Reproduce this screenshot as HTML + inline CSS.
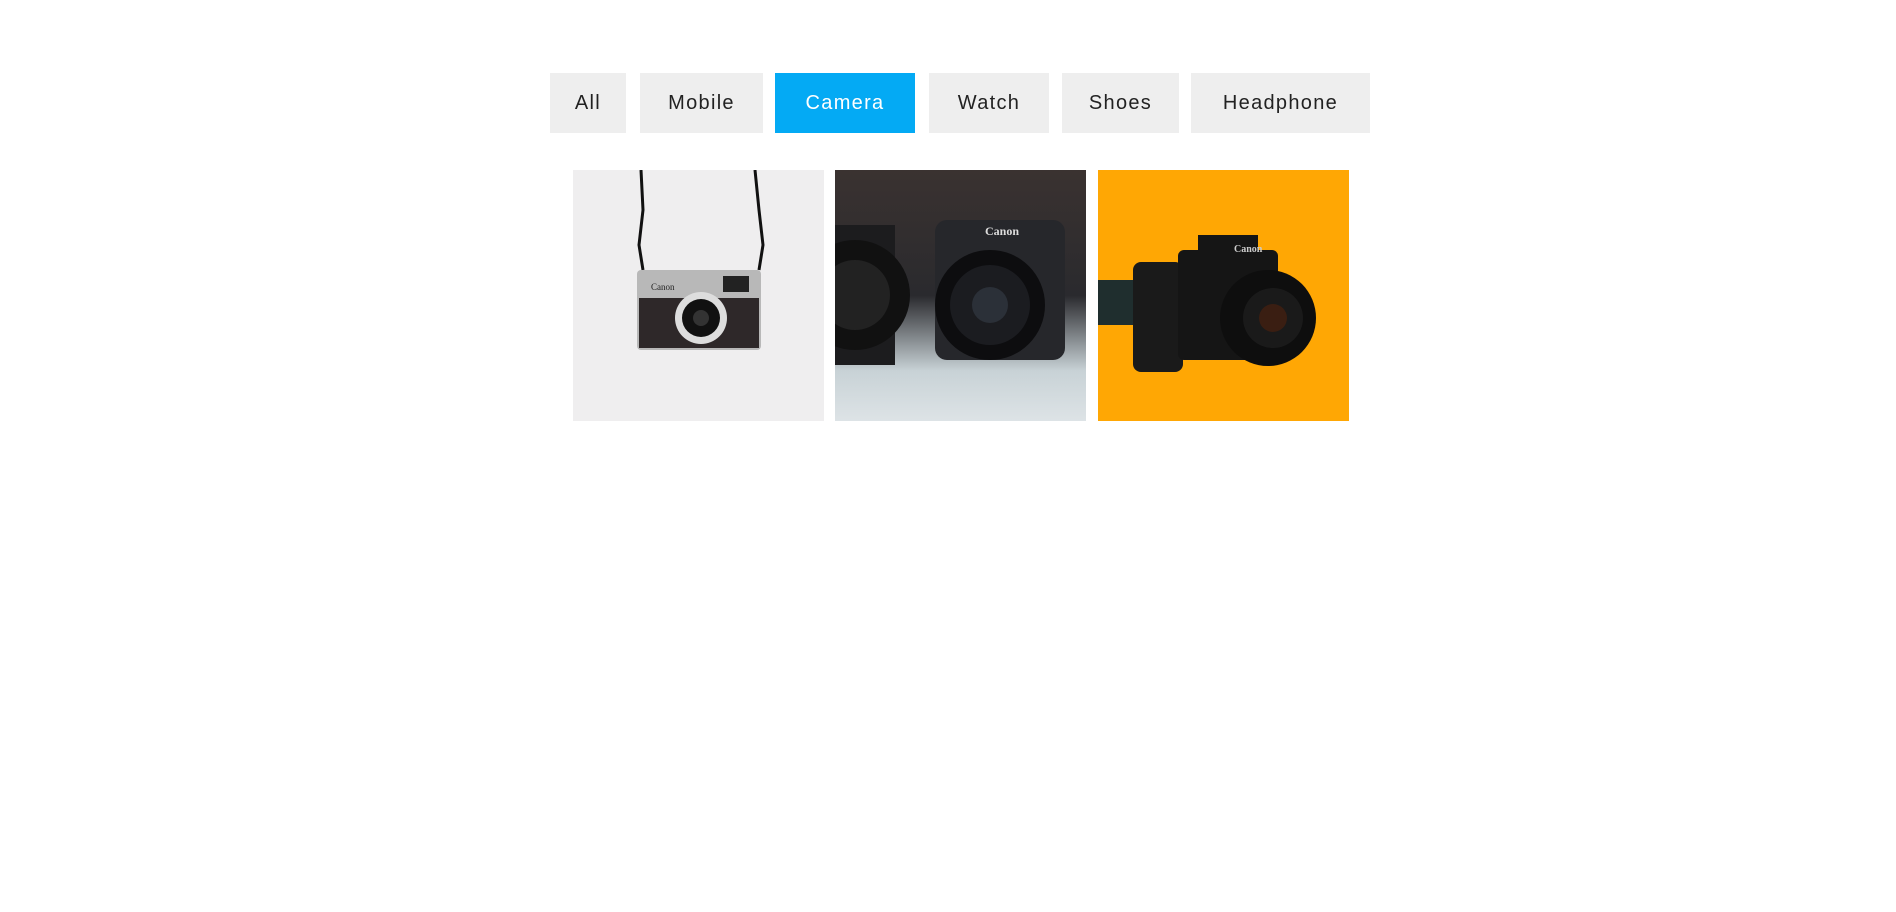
<!DOCTYPE html>
<html><head><meta charset="utf-8"><style>
body{margin:0;width:1896px;height:912px;background:#fff;position:relative;overflow:hidden;font-family:"Liberation Sans",sans-serif}
.b{position:absolute;top:73px;height:60px;background:#eeeeee;color:#222;font-size:20px;letter-spacing:1.3px;display:flex;align-items:center;justify-content:center}
.b.a{background:#04aaf4;color:#fff}
.i{position:absolute;top:170px;width:251px;height:251px;overflow:hidden}
</style></head><body>
<div class="b" style="left:550px;width:76px">All</div>
<div class="b" style="left:640px;width:123px">Mobile</div>
<div class="b a" style="left:775px;width:140px">Camera</div>
<div class="b" style="left:929px;width:120px">Watch</div>
<div class="b" style="left:1062px;width:117px">Shoes</div>
<div class="b" style="left:1191px;width:179px">Headphone</div>

<div class="i" style="left:573px;background:#efeeef">
<svg width="251" height="251" viewBox="0 0 251 251">
<path d="M68 0 L70 40 L66 75 L70 100 M182 0 L186 40 L190 75 L186 100" stroke="#111" stroke-width="3" fill="none"/>
<rect x="64" y="100" width="124" height="80" rx="4" fill="#b8b8b8"/>
<rect x="66" y="128" width="120" height="50" fill="#2e2829"/>
<text x="78" y="120" font-size="9" fill="#222" font-family="Liberation Serif">Canon</text>
<rect x="150" y="106" width="26" height="16" fill="#222"/>
<circle cx="128" cy="148" r="26" fill="#ddd"/>
<circle cx="128" cy="148" r="19" fill="#111"/>
<circle cx="128" cy="148" r="8" fill="#333"/>
</svg></div>

<div class="i" style="left:835px;background:linear-gradient(#3a3230 0,#2a2a2e 50%,#c8d2d6 80%,#dde3e6 100%)">
<svg width="251" height="251" viewBox="0 0 251 251">
<rect x="0" y="55" width="60" height="140" fill="#1c1c1e"/>
<circle cx="20" cy="125" r="55" fill="#111"/><circle cx="20" cy="125" r="35" fill="#222"/>
<rect x="100" y="50" width="130" height="140" rx="12" fill="#26272b"/>
<text x="150" y="65" font-size="12" fill="#ddd" font-family="Liberation Serif" font-weight="bold">Canon</text>
<circle cx="155" cy="135" r="55" fill="#0d0d0f"/>
<circle cx="155" cy="135" r="40" fill="#1b1c20"/>
<circle cx="155" cy="135" r="18" fill="#2b3038"/>
</svg></div>

<div class="i" style="left:1098px;background:#ffa704">
<svg width="251" height="251" viewBox="0 0 251 251">
<rect x="0" y="110" width="40" height="45" fill="#1f2e2e"/>
<rect x="35" y="92" width="50" height="110" rx="8" fill="#1a1a1a"/>
<rect x="80" y="80" width="100" height="110" rx="6" fill="#151515"/>
<rect x="100" y="65" width="60" height="25" fill="#151515"/>
<text x="136" y="82" font-size="10" fill="#ccc" font-family="Liberation Serif" font-weight="bold">Canon</text>
<circle cx="170" cy="148" r="48" fill="#0e0e0e"/>
<circle cx="175" cy="148" r="30" fill="#1a1a1a"/>
<circle cx="175" cy="148" r="14" fill="#3a1e12"/>
</svg></div>
</body></html>
